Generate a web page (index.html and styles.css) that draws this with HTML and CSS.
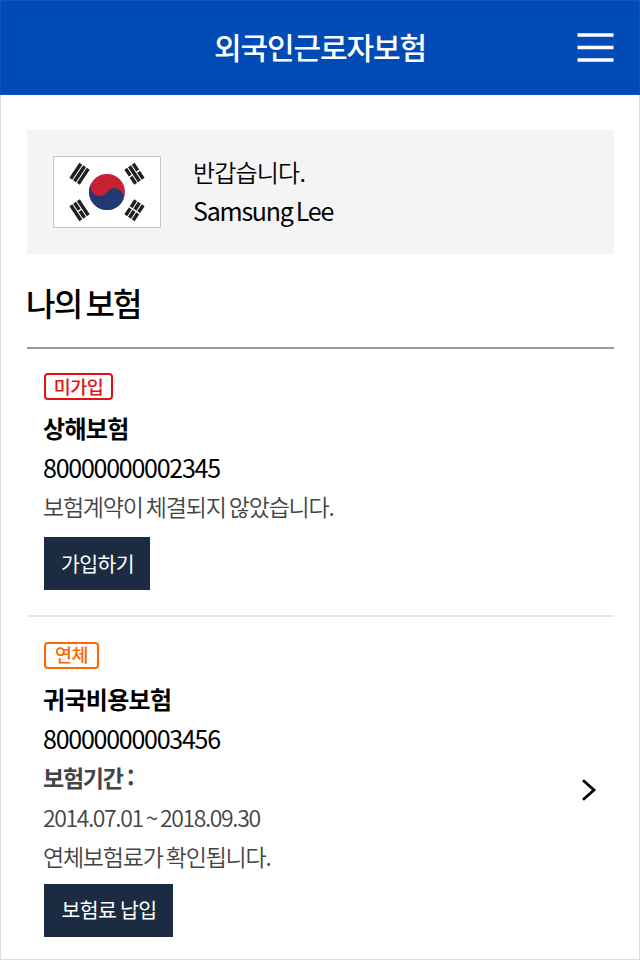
FILE: index.html
```html
<!DOCTYPE html>
<html lang="ko">
<head>
  <meta charset="UTF-8" />
  <meta name="viewport" content="width=device-width, initial-scale=1" />
  <title>외국인근로자보험</title>
  <link rel="stylesheet" href="styles.css">
</head>
<body>
  <header class="header">
    <h1>외국인근로자보험</h1>
    <button class="menu" type="button" aria-label="메뉴">
      <svg width="38" height="32" viewBox="0 0 38 32">
        <path d="M1.5 3h36M1.5 15.5h36M1.5 28h36" stroke="#fff" stroke-width="3.6"/>
      </svg>
    </button>
  </header>

  <main>
    <section class="welcome">
      <svg class="flag" width="108" height="72" viewBox="-36 -24 72 48">
        <path fill="#fff" d="M-36-24h72v48h-72z"/>
        <g transform="rotate(-56.31)" stroke-width="2.3">
          <path stroke="#231f20" d="M-6-25H6M-6-22H6M-6-19H6M-6 19H6M-6 22H6M-6 25H6"/>
          <path stroke="#fff" stroke-width="1" d="M0 17v10"/>
          <circle r="12" fill="#c92033" stroke="none"/>
          <path fill="#213a73" d="M0-12A6 6 0 0 0 0 0A6 6 0 0 1 0 12A12 12 0 0 1 0-12Z"/>
        </g>
        <g transform="rotate(-123.69)" stroke-width="2.3">
          <path stroke="#231f20" d="M-6-25H6M-6-22H6M-6-19H6M-6 19H6M-6 22H6M-6 25H6"/>
          <path stroke="#fff" stroke-width="1" d="M0-23.5v3M0 17v3.5M0 23.5v3"/>
        </g>
        <path fill="none" stroke="#c8c8c8" stroke-width=".667" d="M-35.667-23.667h71.333v47.333h-71.333z"/>
      </svg>
      <div class="welcome-text">
        <p>반갑습니다.</p>
        <p class="user">Samsung Lee</p>
      </div>
    </section>

    <h2>나의 보험</h2>

    <ul class="list">
      <li class="item">
        <span class="badge badge-red">미가입</span>
        <h3>상해보험</h3>
        <p class="number">80000000002345</p>
        <p class="desc">보험계약이 체결되지 않았습니다.</p>
        <button class="btn btn-join" type="button">가입하기</button>
      </li>
      <li class="item item-link">
        <div class="info">
          <span class="badge badge-orange">연체</span>
          <h3>귀국비용보험</h3>
          <p class="number">80000000003456</p>
          <p class="term">보험기간 :</p>
          <p class="date">2014.07.01 ~ 2018.09.30</p>
          <p class="desc">연체보험료가 확인됩니다.</p>
          <button class="btn btn-pay" type="button">보험료 납입</button>
        </div>
        <svg class="arrow" width="16" height="24" viewBox="0 0 16 24">
          <path d="M2 2.2L13 12L2 21.8" fill="none" stroke="#000" stroke-width="2.8"/>
        </svg>
      </li>
    </ul>
  </main>
</body>
</html>
```

FILE: styles.css
```css
* {
  box-sizing: border-box;
  margin: 0;
  padding: 0;
}
body {
  background-color: #fff;
  color: #000;
  font-family: "Noto Sans CJK KR", sans-serif;
}
.header {
  display: grid;
  grid-template-columns: 1fr auto 1fr;
  align-items: center;
  height: 95px;
  padding: 0 25px;
  background-color: #004bb5;
  border: 1px solid #1055b8;
}
.header h1 {
  grid-column: 2;
  padding-bottom: 4px;
  color: #fff;
  font-size: 30px;
  font-weight: 500;
  line-height: 44px;
  letter-spacing: -1.1px;
}
.menu {
  justify-self: end;
  height: 32px;
  border: none;
  background: none;
}
.menu svg {
  display: block;
}
main {
  height: 865px;
  padding: 35px 25px 0 26px;
  border: 1px solid #dcdcdc;
  border-top: none;
}
.welcome {
  display: flex;
  align-items: center;
  height: 124px;
  padding-left: 26px;
  background-color: #f4f4f4;
  border-radius: 1px;
}
.welcome-text {
  margin-left: 32px;
  padding-bottom: 3px;
  font-size: 24px;
  font-weight: 350;
  line-height: 39px;
  letter-spacing: -0.8px;
}
.user {
  font-size: 25px;
  font-weight: 400;
  letter-spacing: -1.25px;
  word-spacing: -2.5px;
}
h2 {
  height: 95px;
  padding-top: 26px;
  border-bottom: 2px solid #999;
  font-size: 32px;
  font-weight: 500;
  line-height: 45px;
  letter-spacing: -1.8px;
  word-spacing: -3px;
  text-indent: -1px;
}
.list {
  list-style: none;
}
.item {
  height: 268px;
  padding: 24px 17px 0;
  border-bottom: 2px solid #e6e6e6;
  line-height: 39.5px;
}
.item-link {
  display: flex;
  justify-content: space-between;
  align-items: center;
  height: 342px;
  padding-top: 3px;
  border-bottom: none;
}
.badge {
  display: block;
  width: 69px;
  height: 27px;
  margin-bottom: 8px;
  border: 2px solid;
  border-radius: 4px;
  font-size: 18.5px;
  font-weight: 500;
  line-height: 22px;
  letter-spacing: -0.5px;
  text-align: center;
}
.badge-red {
  color: #e60f14;
}
.badge-orange {
  width: 55px;
  margin-bottom: 10px;
  line-height: 21px;
  color: #ff6600;
}
h3,
.number,
.desc,
.term,
.date {
  margin-left: -1px;
}
h3 {
  font-size: 24px;
  font-weight: 700;
  letter-spacing: -0.7px;
}
.number {
  font-size: 25px;
  letter-spacing: -1.25px;
}
.desc,
.term,
.date {
  color: #444;
  font-size: 23px;
  font-weight: 350;
  letter-spacing: -1.23px;
  word-spacing: -2px;
}
.date {
  letter-spacing: -1.38px;
}
.term {
  font-weight: 700;
  word-spacing: -1px;
}
.btn {
  display: block;
  height: 53px;
  margin-top: 10px;
  padding-left: 1px;
  border: none;
  background-color: #1a2b42;
  color: #fff;
  font-family: inherit;
  font-size: 20.5px;
  letter-spacing: -0.6px;
}
.btn-join {
  width: 106px;
}
.btn-pay {
  width: 129px;
  margin-top: 7.5px;
  padding-bottom: 3px;
  word-spacing: -1.5px;
}
```
